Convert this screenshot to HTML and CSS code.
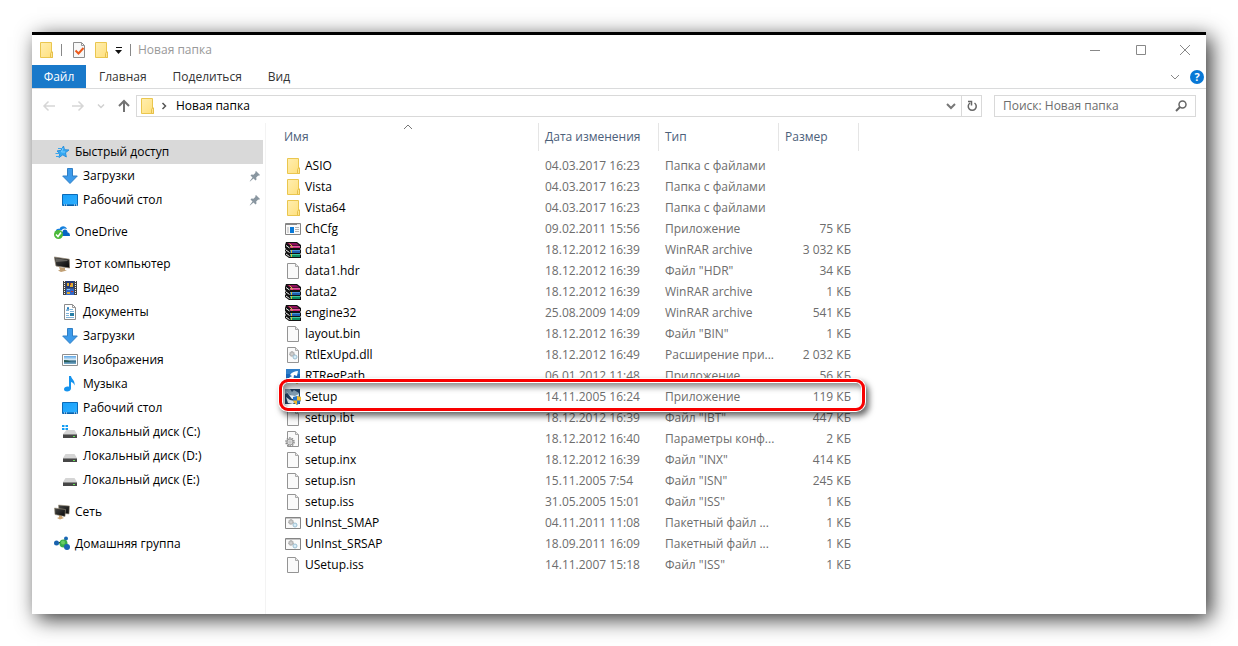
FILE: index.html
```html
<!DOCTYPE html>
<html lang="ru">
<head>
<meta charset="utf-8">
<title>Новая папка</title>
<link rel="stylesheet" href="styles.css">
</head>
<body>
<svg class="sprite" aria-hidden="true">
  <defs>
    <linearGradient id="g-folder" x1="0" y1="0" x2="1" y2="1"><stop offset="0" stop-color="#ffeeb0"/><stop offset="1" stop-color="#ffe07c"/></linearGradient>
    <linearGradient id="g-screen" x1="0" y1="0" x2="1" y2="1"><stop offset="0" stop-color="#19a1fb"/><stop offset="1" stop-color="#2fb0ff"/></linearGradient>
    <linearGradient id="g-dark" x1="0" y1="0" x2="1" y2="1"><stop offset="0" stop-color="#4a4a48"/><stop offset="1" stop-color="#050505"/></linearGradient>
    <linearGradient id="g-photo" x1="0" y1="0" x2="0" y2="1"><stop offset="0" stop-color="#5aa5e6"/><stop offset=".5" stop-color="#e4f1f7"/><stop offset=".6" stop-color="#2c6380"/><stop offset="1" stop-color="#7cb0ce"/></linearGradient>
  </defs>
  <symbol id="folder" viewBox="0 0 16 16"><path d="M2.500.5h11v9.500h1v5.500h-12z" fill="url(#g-folder)" stroke="#eac64e"/><path d="M12.500 15.500v-4l1-1.500h1v5.500z" fill="#ffe58d" stroke="#e6c04b"/></symbol>
  <symbol id="file" viewBox="0 0 16 16"><path d="M2.500.5h8l3 3v12h-11z" fill="#fafafa" stroke="#949494"/><path d="M10.500.5v3h3" fill="#e6e6e6" stroke="#aaa"/></symbol>
  <symbol id="props" viewBox="0 0 16 16"><path d="M2.500.5h8l3 3v12h-11z" fill="#f8f8f8" stroke="#8d8d8d"/><path d="M10.500.5v3h3" fill="none" stroke="#999"/><path d="M4.500 8.500l3 3 5-5.500" fill="none" stroke="#ec5a1c" stroke-width="2"/></symbol>
  <symbol id="star" viewBox="0 0 16 16"><path d="M9.500 2l1 3.700 4.500.3-3.500 2.700.8 4.300-3.500-2.200L5 13.500l.8-4L3 7l4-.7z" fill="#35aaf3" stroke="#2b8fdb"/><path d="M4 4.500h4M1.500 9.500h4M2 12.500h4" stroke="#38a5ed"/><path d="M9 4l-1.500 4H11" fill="none" stroke="#7accff"/></symbol>
  <symbol id="down" viewBox="0 0 16 16"><path d="M5.500.5h5v7.500h4.800L8 15.500.7 8h4.800z" fill="#3c9aea" stroke="#2f7fc5"/></symbol>
  <symbol id="desktop" viewBox="0 0 16 16"><path d="M.5 2.500h15v11H.5z" fill="url(#g-screen)" stroke="#0b6bb8"/><path d="M1 13h14" stroke="#0757a0"/><path d="M2 13h1M4 13h1M12 13h1M14 13h1" stroke="#fff"/></symbol>
  <symbol id="onedrive" viewBox="0 0 16 16"><path d="M1.500 9C1 5.800 3.700 4.200 5.500 5 6.500 1.500 11.500 1.200 13 5c-3-1.300-4.500 0-5.500 1.500C5 6 3.500 7 3.500 9z" fill="#1580de"/><path d="M5 12c0-3 1.500-4.500 3.500-4C9 4.500 13.500 5 13.700 8.500c1.800.2 2.300 1.500 2.300 3.500z" fill="#0765c4"/><circle cx="4.500" cy="10.500" r="4.500" fill="#4cb939"/><path d="M2 10.500l2 2L7 8.500" fill="none" stroke="#fff" stroke-width="1.500"/></symbol>
  <symbol id="computer" viewBox="0 0 16 16"><path d="M5 11l6 1v2l2 .5-6 1.500-3-1.500 2-.8z" fill="#c1a075"/><path d="M.3 1l14.900 2.200.5 8.800L2 10z" fill="url(#g-dark)" stroke="#8d806e" stroke-width=".7"/><path d="M1.500 2.200l12 1.700v1L2 6z" fill="#66645f"/></symbol>
  <symbol id="video" viewBox="0 0 16 16"><path d="M1 1h14v14H1z" fill="#454545"/><path d="M4 1h8v7H4z" fill="#243d79"/><path d="M4 8.500h8V15H4z" fill="#3167c7"/><path d="M2.500 1v14M13.500 1v14" stroke="#f4f4f4" stroke-dasharray="1 1"/><path d="M5 6V3h2v3M8 3h3v4H8zM5 12h3v2H5z" fill="#dfaa2d"/><path d="M8 3h1v2H8zM9 11h2v1H9z" fill="#b83931"/><path d="M5 9h3v1H5z" fill="#79c5ff"/></symbol>
  <symbol id="document" viewBox="0 0 16 16"><path d="M2.500.5h8l3 3v12h-11z" fill="#fff" stroke="#8b8b8b"/><path d="M10.500.5v3h3" fill="none" stroke="#999"/><path d="M4 6.500h3M8 5.500h3M8 7.500h4M4 9.500h3M4 11.500h3M4 13.500h8" stroke="#7fb3d8"/><path d="M8 9h4v3H8z" fill="#287fa6"/><path d="M5 6l1-3 1 3" fill="none" stroke="#287ebc"/></symbol>
  <symbol id="picture" viewBox="0 0 16 16"><path d="M.5 2.500h15v11H.5z" fill="#fff" stroke="#8f8f8f"/><path d="M2 4h12v8H2z" fill="url(#g-photo)"/><path d="M2 8l4 .5 3 1.500H2z" fill="#285c54"/></symbol>
  <symbol id="music" viewBox="0 0 16 16"><path d="M7 0h2c.3 3 4.500 4.500 3.500 9.500C12 7.500 11 6.500 9 6v6.500C9 16 2 16.500 2 13.200 2 10.700 5 10 7 10.700z" fill="#1593ee"/></symbol>
  <symbol id="disk" viewBox="0 0 16 16"><path d="M3.500 6h9L15 10H1z" fill="#d5d5d5"/><path d="M1 10h14v4H1z" fill="#474747"/><path d="M1 10.500h14" stroke="#8a8a8a"/><path d="M11 12h2v1h-2z" fill="#65e556"/></symbol>
  <symbol id="sysdisk" viewBox="0 0 16 16"><path d="M4.500 6h8L15 10H1z" fill="#d5d5d5"/><path d="M1 10h14v4H1z" fill="#474747"/><path d="M1 10.500h14" stroke="#8a8a8a"/><path d="M11 12h2v1h-2z" fill="#65e556"/><path d="M0 1h2.500v2H0zM3.500 1H6v2H3.500zM0 4h2.500v2H0zM3.500 4H6v2H3.500z" fill="#139df4"/></symbol>
  <symbol id="network" viewBox="0 0 16 16"><path d="M5 11h3v2l2 1-4 1.500L3 14l2-.7z" fill="#cba370"/><path d="M4.500 1l11 1-.5 8-10-1z" fill="url(#g-dark)" stroke="#a49a87" stroke-width=".6"/><path d="M.5 4l11 1.500-.5 7L1 10.500z" fill="url(#g-dark)" stroke="#9c927e" stroke-width=".6"/></symbol>
  <symbol id="homegroup" viewBox="0 0 16 16"><path d="M2.500 7.500L10 8l2-5M10 8l3 3" stroke="#a9dcc8" stroke-width="1"/><circle cx="2.500" cy="7" r="2.500" fill="#1862ae"/><circle cx="12" cy="2.500" r="2" fill="#1967b4"/><circle cx="9.500" cy="7.500" r="4" fill="#38ad4b"/><circle cx="9" cy="6.500" r="2" fill="#67cd65"/><circle cx="13" cy="11" r="3" fill="#1b65b3"/></symbol>
  <symbol id="app" viewBox="0 0 16 16"><path d="M.5 2.500h15v11H.5z" fill="#fafafa" stroke="#858585"/><path d="M1 3.500h14" stroke="#888"/><path d="M12 3.500h3" stroke="#ddd"/><path d="M5 6h4v6H5z" fill="#0879d8"/><path d="M3 6v6M10 6.500h4M10 8.500h4M10 10.500h4" stroke="#b5b5b5"/></symbol>
  <symbol id="rar" viewBox="0 0 16 16">
    <path d="M1 0h11l4 3v3l-1 1 1 1v3l-1 1 1 1v3H4l-4-3v-2l1-1-1-1V8l1-1-1-1V3z" fill="#111"/>
    <path d="M2 1h9.500l3 2.500H5z" fill="#8e0f5a"/><path d="M5 4h10v2H5z" fill="#c8287f"/><path d="M5 4h10v1H5z" fill="#e0609f"/>
    <path d="M5 8h10v3H5z" fill="#1b5fb0"/><path d="M5 8h10v1H5z" fill="#4c98d8"/>
    <path d="M5 12h10v3H5z" fill="#0c8a64"/><path d="M5 12h10v1H5z" fill="#43c89d"/>
    <path d="M1 3.500l3.500 2.500M1 8l3.500 2.500M1 12l3.500 2.500" fill="none" stroke="#f2f2f2"/>
    <path d="M4.500 1.500L7 4v2M6.500 8v3M6.500 12v3" fill="none" stroke="#d8be3c"/>
  </symbol>
  <symbol id="gear" viewBox="0 0 10 10"><circle cx="5" cy="5" r="4" fill="#eee" stroke="#888" stroke-width="1.500" stroke-dasharray="1.500 1"/><circle cx="5" cy="5" r="3" fill="#ddd" stroke="#999"/><circle cx="5" cy="5" r="1" fill="#fff" stroke="#888" stroke-width=".5"/></symbol>
  <symbol id="dll" viewBox="0 0 16 16"><use href="#file" width="16" height="16"/><use href="#gear" x="4" y="4" width="6" height="6"/><circle cx="10" cy="10" r="2" fill="#d8ecf6" stroke="#9bbfd2"/></symbol>
  <symbol id="config" viewBox="0 0 16 16"><use href="#file" width="16" height="16"/><use href="#gear" y="6" width="10" height="10"/></symbol>
  <symbol id="batch" viewBox="0 0 16 16"><path d="M.5 2.500h15v11H.5z" fill="#fafafa" stroke="#858585"/><path d="M1 3.500h14" stroke="#c5c5c5"/><use href="#gear" x="3" y="4" width="6" height="6"/><circle cx="10" cy="10" r="2" fill="#d8ecf6" stroke="#9bbfd2"/></symbol>
  <symbol id="path" viewBox="0 0 16 16"><path d="M1 1h14v14H1z" fill="#1768bd"/><path d="M1 1h14v5H1z" fill="#317fc9"/><path d="M2 14c1-4 3-5 5-6L5 7c2-3 5-4 8-4l-1 5-3-1-1 7z" fill="#fff"/><path d="M9 10h6v2q-1 3-3 4-2-1-3-4z" fill="#ecb32f"/><path d="M9 10h3v3H9z" fill="#2674c7"/></symbol>
  <symbol id="installer" viewBox="0 0 16 16"><path d="M0 0h15v15H0z" fill="#203f61"/><path d="M0 0h5l2 3 2-2 5 3v4L7 7 3 4 0 5z" fill="#7f9bb0"/><path d="M1 2l4 4 5 1 4-2-1 4-6 1z" fill="#eef5f8"/><path d="M1 8l4 3 5 1-2 3-5-1z" fill="#dce8ef"/><path d="M8 8l4-1 4 1v3q-.5 3-4 5-3.500-2-4-5z" fill="#2674c7"/><path d="M12 7l4 1v3.500h-4zM8 11.500h4V16q-3.500-2-4-4.500z" fill="#f2ba2d"/></symbol>
  <symbol id="pin" viewBox="0 0 12 12"><path d="M7 1l4 4-1 .8-.8-.3-2 2 .3 2L6.500 10.500 4.500 8.500 1 11.500l-.3-.3L3.500 7.500 1.500 5.500l1-1 2 .3 2-2L6.200 2z" fill="#8996a0"/></symbol>
  <symbol id="chevron" viewBox="0 0 10 10"><path d="M1 3l4 4 4-4" fill="none" stroke="currentColor"/></symbol>
</svg>

<main class="window">
  <header class="titlebar">
    <div class="quick">
      <svg class="icon"><use href="#folder"/></svg>
      <span class="divider"></span>
      <button aria-label="Свойства"><svg class="icon"><use href="#props"/></svg></button>
      <button aria-label="Новая папка"><svg class="icon"><use href="#folder"/></svg></button>
      <button aria-label="Настройка панели"><svg class="more" viewBox="0 0 8 8"><path d="M1 1h6v1H1zM0 4h7L3.500 8z" fill="#111"/></svg></button>
      <span class="divider"></span>
    </div>
    <h1>Новая папка</h1>
    <div class="controls">
      <button aria-label="Свернуть"><svg viewBox="0 0 12 12"><path d="M1 6.500h10" stroke="#888"/></svg></button>
      <button aria-label="Развернуть"><svg viewBox="0 0 12 12"><path d="M1.500 1.500h9v9h-9z" fill="none" stroke="#888"/></svg></button>
      <button aria-label="Закрыть"><svg viewBox="0 0 12 12"><path d="M1 1l10 10M11 1L1 11" stroke="#888"/></svg></button>
    </div>
  </header>

  <div class="tabs">
    <button class="tab tab-file">Файл</button>
    <div class="tab-list">
      <button class="tab">Главная</button>
      <button class="tab">Поделиться</button>
      <button class="tab">Вид</button>
    </div>
    <div class="ribbon-tools">
      <button aria-label="Развернуть ленту"><svg class="small"><use href="#chevron"/></svg></button>
      <button class="help" aria-label="Справка">?</button>
    </div>
  </div>

  <div class="navigation">
    <div class="history">
      <button aria-label="Назад"><svg viewBox="0 0 14 14"><path d="M13 7H2M6.500 2.500L2 7l4.500 4.500" fill="none" stroke="#d6d6d6" stroke-width="1.500"/></svg></button>
      <button aria-label="Вперед"><svg viewBox="0 0 14 14"><path d="M1 7h11M7.500 2.500L12 7l-4.500 4.500" fill="none" stroke="#d6d6d6" stroke-width="1.500"/></svg></button>
      <button class="recent" aria-label="Последние"><svg viewBox="0 0 10 10"><path d="M2 3.500l3 3 3-3" fill="none" stroke="#d0d0d0" stroke-width="1.500"/></svg></button>
      <button aria-label="Вверх"><svg viewBox="0 0 14 14"><path d="M7 13V2M2 7l5-5 5 5" fill="none" stroke="#737373" stroke-width="2"/></svg></button>
    </div>
    <div class="address">
      <svg class="icon"><use href="#folder"/></svg>
      <svg class="crumb-arrow" viewBox="0 0 8 8"><path d="M2.500 1l3 3-3 3" fill="none" stroke="#555" stroke-width="1.500"/></svg>
      <button class="crumb">Новая папка</button>
      <button class="address-menu" aria-label="Предыдущие расположения"><svg viewBox="0 0 10 10"><path d="M1 3l4 4 4-4" fill="none" stroke="#777" stroke-width="2"/></svg></button>
      <button class="refresh" aria-label="Обновить"><svg viewBox="0 0 12 12"><path d="M8.500 3A4 4 0 1 1 4 3M2 1.500h3.500v4" fill="none" stroke="#666" stroke-width="1.500"/></svg></button>
    </div>
    <div class="search">
      <input type="search" aria-label="Поиск" placeholder="Поиск: Новая папка">
      <button aria-label="Найти"><svg viewBox="0 0 12 12"><circle cx="7.500" cy="4.500" r="3.500" fill="none" stroke="#666" stroke-width="1.500"/><path d="M5 7L1 11" stroke="#666" stroke-width="2"/></svg></button>
    </div>
  </div>

  <div class="content">
    <nav class="sidebar">
      <section>
        <a class="root selected" href="#quick"><svg class="icon"><use href="#star"/></svg>Быстрый доступ</a>
        <a href="#downloads"><svg class="icon"><use href="#down"/></svg>Загрузки<svg class="pin"><use href="#pin"/></svg></a>
        <a href="#desk"><svg class="icon"><use href="#desktop"/></svg>Рабочий стол<svg class="pin"><use href="#pin"/></svg></a>
      </section>
      <section>
        <a class="root" href="#cloud"><svg class="icon"><use href="#onedrive"/></svg>OneDrive</a>
      </section>
      <section>
        <a class="root" href="#pc"><svg class="icon"><use href="#computer"/></svg>Этот компьютер</a>
        <a href="#videos"><svg class="icon"><use href="#video"/></svg>Видео</a>
        <a href="#documents"><svg class="icon"><use href="#document"/></svg>Документы</a>
        <a href="#downloads"><svg class="icon"><use href="#down"/></svg>Загрузки</a>
        <a href="#pictures"><svg class="icon"><use href="#picture"/></svg>Изображения</a>
        <a href="#songs"><svg class="icon"><use href="#music"/></svg>Музыка</a>
        <a href="#desk"><svg class="icon"><use href="#desktop"/></svg>Рабочий стол</a>
        <a href="#c"><svg class="icon"><use href="#sysdisk"/></svg>Локальный диск (C:)</a>
        <a href="#d"><svg class="icon"><use href="#disk"/></svg>Локальный диск (D:)</a>
        <a href="#e"><svg class="icon"><use href="#disk"/></svg>Локальный диск (E:)</a>
      </section>
      <section>
        <a class="root" href="#net"><svg class="icon"><use href="#network"/></svg>Сеть</a>
      </section>
      <section>
        <a class="root" href="#home"><svg class="icon"><use href="#homegroup"/></svg>Домашняя группа</a>
      </section>
    </nav>

    <div class="listing">
      <table class="files">
        <colgroup><col class="col-name"><col class="col-date"><col class="col-type"><col class="col-size"></colgroup>
        <thead>
          <tr><th>Имя<svg class="sort" viewBox="0 0 10 6"><path d="M1 5l4-4 4 4" fill="none" stroke="#777"/></svg></th><th>Дата изменения</th><th>Тип</th><th>Размер</th></tr>
        </thead>
        <tbody>
          <tr><td><svg class="icon"><use href="#folder"/></svg>ASIO</td><td>04.03.2017 16:23</td><td>Папка с файлами</td><td></td></tr>
          <tr><td><svg class="icon"><use href="#folder"/></svg>Vista</td><td>04.03.2017 16:23</td><td>Папка с файлами</td><td></td></tr>
          <tr><td><svg class="icon"><use href="#folder"/></svg>Vista64</td><td>04.03.2017 16:23</td><td>Папка с файлами</td><td></td></tr>
          <tr><td><svg class="icon"><use href="#app"/></svg>ChCfg</td><td>09.02.2011 15:56</td><td>Приложение</td><td>75 КБ</td></tr>
          <tr><td><svg class="icon"><use href="#rar"/></svg>data1</td><td>18.12.2012 16:39</td><td>WinRAR archive</td><td>3 032 КБ</td></tr>
          <tr><td><svg class="icon"><use href="#file"/></svg>data1.hdr</td><td>18.12.2012 16:39</td><td>Файл "HDR"</td><td>34 КБ</td></tr>
          <tr><td><svg class="icon"><use href="#rar"/></svg>data2</td><td>18.12.2012 16:39</td><td>WinRAR archive</td><td>1 КБ</td></tr>
          <tr><td><svg class="icon"><use href="#rar"/></svg>engine32</td><td>25.08.2009 14:09</td><td>WinRAR archive</td><td>541 КБ</td></tr>
          <tr><td><svg class="icon"><use href="#file"/></svg>layout.bin</td><td>18.12.2012 16:39</td><td>Файл "BIN"</td><td>1 КБ</td></tr>
          <tr><td><svg class="icon"><use href="#dll"/></svg>RtlExUpd.dll</td><td>18.12.2012 16:49</td><td>Расширение при...</td><td>2 032 КБ</td></tr>
          <tr><td><svg class="icon"><use href="#path"/></svg>RTRegPath</td><td>06.01.2012 11:48</td><td>Приложение</td><td>56 КБ</td></tr>
          <tr class="marked"><td><svg class="icon"><use href="#installer"/></svg>Setup<span class="marker"></span></td><td>14.11.2005 16:24</td><td>Приложение</td><td>119 КБ</td></tr>
          <tr><td><svg class="icon"><use href="#file"/></svg>setup.ibt</td><td>18.12.2012 16:39</td><td>Файл "IBT"</td><td>447 КБ</td></tr>
          <tr><td><svg class="icon"><use href="#config"/></svg>setup</td><td>18.12.2012 16:40</td><td>Параметры конф...</td><td>2 КБ</td></tr>
          <tr><td><svg class="icon"><use href="#file"/></svg>setup.inx</td><td>18.12.2012 16:39</td><td>Файл "INX"</td><td>414 КБ</td></tr>
          <tr><td><svg class="icon"><use href="#file"/></svg>setup.isn</td><td>15.11.2005 7:54</td><td>Файл "ISN"</td><td>245 КБ</td></tr>
          <tr><td><svg class="icon"><use href="#file"/></svg>setup.iss</td><td>31.05.2005 15:01</td><td>Файл "ISS"</td><td>1 КБ</td></tr>
          <tr><td><svg class="icon"><use href="#batch"/></svg>UnInst_SMAP</td><td>04.11.2011 11:08</td><td>Пакетный файл ...</td><td>1 КБ</td></tr>
          <tr><td><svg class="icon"><use href="#batch"/></svg>UnInst_SRSAP</td><td>18.09.2011 16:09</td><td>Пакетный файл ...</td><td>1 КБ</td></tr>
          <tr><td><svg class="icon"><use href="#file"/></svg>USetup.iss</td><td>14.11.2007 15:18</td><td>Файл "ISS"</td><td>1 КБ</td></tr>
        </tbody>
      </table>
    </div>
  </div>
</main>
</body>
</html>
```
FILE: styles.css
```css
* { box-sizing: border-box; }

body {
  display: flex;
  min-height: 100vh;
  margin: 0;
  padding: 32px;
  background: #fff;
  color: #000;
  font: 12px/16px "Open Sans", "Noto Sans", sans-serif;
}

button, input {
  margin: 0;
  padding: 0;
  border: 0;
  background: none;
  color: inherit;
  font: inherit;
}

svg { display: block; flex: none; }
.sprite { position: absolute; width: 0; height: 0; }
.icon { width: 16px; height: 16px; }

.window {
  display: flex;
  flex: 1;
  flex-direction: column;
  min-width: 0;
  border-top: 3px solid #000;
  background: #fff;
  box-shadow: 5px 5px 20px rgba(0, 0, 0, .8);
}

.titlebar { display: flex; align-items: center; height: 30px; padding-left: 6px; }
.quick { display: flex; align-items: center; gap: 6px; }
.divider { width: 1px; height: 12px; margin: 0 3px 0 1px; background: #888; }
.more { width: 8px; height: 8px; }
h1 { margin: 0 0 0 4px; color: #999; font-size: 12px; font-weight: 400; }
.controls { display: flex; margin-left: auto; }
.controls button { display: grid; place-items: center; width: 46px; height: 28px; }
.controls button:last-child { width: 42px; }
.controls svg { width: 12px; height: 12px; }

.tabs { display: flex; height: 24px; border-bottom: 1px solid #dadbdc; color: #333; }
.tab-file { width: 54px; background: #1979ca; color: #fff; }
.tab-list { display: flex; gap: 26px; padding-left: 13px; }
.ribbon-tools { display: flex; align-items: center; gap: 10px; margin-left: auto; padding-right: 2px; color: #888; }
.small { width: 10px; height: 10px; }
.help { width: 14px; height: 14px; border-radius: 50%; background: #0878d6; color: #fff; font-size: 11px; font-weight: 700; line-height: 14px; }

.navigation { display: flex; height: 34px; padding: 6px 10px 6px 0; }
.history { display: flex; align-items: center; gap: 15px; width: 104px; padding-left: 10px; }
.history svg { width: 14px; height: 14px; }
.history .recent { margin: 0 -4px; }
.history .recent svg { width: 10px; height: 10px; }
.address { display: flex; flex: 1; align-items: center; border: 1px solid #d9d9d9; }
.address .icon { margin-left: 2px; }
.crumb-arrow { width: 8px; height: 8px; margin: 0 8px 0 5px; }
.crumb-arrow + .crumb { flex: 1; text-align: left; }
.address-menu, .refresh { display: grid; place-items: center; align-self: stretch; width: 20px; }
.refresh { border-left: 1px solid #d9d9d9; }
.address-menu svg { width: 10px; height: 10px; }
.refresh svg { width: 12px; height: 12px; }
.search { display: flex; align-items: center; width: 202px; margin-left: 12px; padding: 0 8px; border: 1px solid #d9d9d9; }
.search input { flex: 1; min-width: 0; outline: 0; }
.search input::placeholder { color: #6d6d6d; opacity: 1; }
.search svg { width: 12px; height: 12px; }

.content { display: flex; flex: 1; }
.sidebar { display: flex; flex-direction: column; gap: 8px; width: 234px; padding: 17px 2px 0 0; border-right: 1px solid #f3f3f3; }
.sidebar a { display: flex; align-items: center; gap: 5px; height: 24px; padding: 0 2px 0 30px; color: #000; text-decoration: none; white-space: nowrap; }
.sidebar .root { padding-left: 22px; }
.sidebar .selected { background: #d9d9d9; }
.pin { width: 12px; height: 12px; margin-left: auto; }

.listing { flex: 1; min-width: 0; }
.files { width: 593px; border-collapse: separate; border-spacing: 0; table-layout: fixed; }
.col-name { width: 273px; }
.col-date, .col-type { width: 120px; }
.col-size { width: 80px; }
.files th {
  height: 28px;
  padding: 0 0 0 6px;
  border-right: 1px solid #e5e5e5;
  color: #4c607a;
  font-weight: 400;
  text-align: left;
}
.files th:first-child { position: relative; padding-left: 18px; }
.sort { position: absolute; top: 1px; left: 137px; width: 10px; height: 6px; }
.files tbody::before { display: block; height: 4px; content: ""; }
.files td { height: 21px; padding: 0 0 0 6px; color: #6d6d6d; white-space: nowrap; }
.files td:first-child { padding-left: 19px; color: #000; }
.files td:last-child { padding-right: 8px; text-align: right; }
.files td .icon { display: inline-block; margin-right: 4px; vertical-align: top; }
.marked { position: relative; }
.marker {
  position: absolute;
  top: -7px;
  right: -6px;
  bottom: -4px;
  left: 13px;
  border: 3px solid #f80000;
  border-radius: 9px;
  box-shadow: 0 0 0 1px #fff, 3px 4px 6px 1px rgba(0, 0, 0, .6), inset 0 0 0 1px #fff, inset 3px 5px 6px rgba(0, 0, 0, .45);
  pointer-events: none;
}
```
